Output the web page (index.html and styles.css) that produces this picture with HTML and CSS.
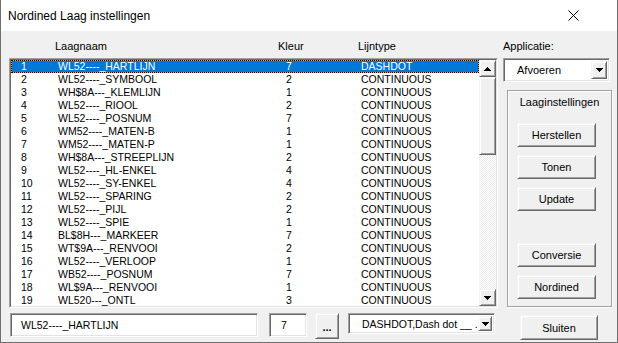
FILE: index.html
```html
<!DOCTYPE html>
<html>
<head>
<meta charset="utf-8">
<link rel="stylesheet" href="styles.css">
</head>
<body>
<div class="window">
  <div class="titlebar">
    <span class="title">Nordined Laag instellingen</span>
    <svg class="close" width="11" height="11" viewBox="0 0 11 11"><path d="M0.5 0.5L10.5 10.5M10.5 0.5L0.5 10.5" stroke="#000" stroke-width="1" fill="none"/></svg>
  </div>
  <div class="body">
    <div class="left">
      <div class="headers"><span>Laagnaam</span><span>Kleur</span><span>Lijntype</span></div>
      <div class="listbox">
        <div class="listinner">
          <div class="rows">
            <div class="row sel"><span>1</span><span>WL52----_HARTLIJN</span><span>7</span><span>DASHDOT</span></div>
            <div class="row"><span>2</span><span>WL52----_SYMBOOL</span><span>2</span><span>CONTINUOUS</span></div>
            <div class="row"><span>3</span><span>WH$8A---_KLEMLIJN</span><span>1</span><span>CONTINUOUS</span></div>
            <div class="row"><span>4</span><span>WL52----_RIOOL</span><span>2</span><span>CONTINUOUS</span></div>
            <div class="row"><span>5</span><span>WL52----_POSNUM</span><span>7</span><span>CONTINUOUS</span></div>
            <div class="row"><span>6</span><span>WM52----_MATEN-B</span><span>1</span><span>CONTINUOUS</span></div>
            <div class="row"><span>7</span><span>WM52----_MATEN-P</span><span>1</span><span>CONTINUOUS</span></div>
            <div class="row"><span>8</span><span>WH$8A---_STREEPLIJN</span><span>2</span><span>CONTINUOUS</span></div>
            <div class="row"><span>9</span><span>WL52----_HL-ENKEL</span><span>4</span><span>CONTINUOUS</span></div>
            <div class="row"><span>10</span><span>WL52----_SY-ENKEL</span><span>4</span><span>CONTINUOUS</span></div>
            <div class="row"><span>11</span><span>WL52----_SPARING</span><span>2</span><span>CONTINUOUS</span></div>
            <div class="row"><span>12</span><span>WL52----_PIJL</span><span>2</span><span>CONTINUOUS</span></div>
            <div class="row"><span>13</span><span>WL52----_SPIE</span><span>1</span><span>CONTINUOUS</span></div>
            <div class="row"><span>14</span><span>BL$8H---_MARKEER</span><span>7</span><span>CONTINUOUS</span></div>
            <div class="row"><span>15</span><span>WT$9A---_RENVOOI</span><span>2</span><span>CONTINUOUS</span></div>
            <div class="row"><span>16</span><span>WL52----_VERLOOP</span><span>1</span><span>CONTINUOUS</span></div>
            <div class="row"><span>17</span><span>WB52----_POSNUM</span><span>7</span><span>CONTINUOUS</span></div>
            <div class="row"><span>18</span><span>WL$9A---_RENVOOI</span><span>1</span><span>CONTINUOUS</span></div>
            <div class="row"><span>19</span><span>WL520---_ONTL</span><span>3</span><span>CONTINUOUS</span></div>
          </div>
          <div class="vscroll">
            <div class="raised sbbtn"><svg width="7" height="4" viewBox="0 0 7 4"><rect x="3" y="0" width="1" height="1"/><rect x="2" y="1" width="3" height="1"/><rect x="1" y="2" width="5" height="1"/><rect x="0" y="3" width="7" height="1"/></svg></div>
            <div class="raised thumb"></div>
            <div class="track"></div>
            <div class="raised sbbtn"><svg width="7" height="4" viewBox="0 0 7 4"><rect x="0" y="0" width="7" height="1"/><rect x="1" y="1" width="5" height="1"/><rect x="2" y="2" width="3" height="1"/><rect x="3" y="3" width="1" height="1"/></svg></div>
          </div>
        </div>
      </div>
      <div class="bottom">
        <div class="field namefield">WL52----_HARTLIJN</div>
        <div class="field colorfield">7</div>
        <div class="raised dots">...</div>
        <div class="field combo ltcombo">
          <span class="combotext">DASHDOT,Dash dot __ . __ . __</span>
          <div class="raised ddbtn"><svg width="7" height="4" viewBox="0 0 7 4"><rect x="0" y="0" width="7" height="1"/><rect x="1" y="1" width="5" height="1"/><rect x="2" y="2" width="3" height="1"/><rect x="3" y="3" width="1" height="1"/></svg></div>
        </div>
      </div>
    </div>
    <div class="right">
      <div class="label">Applicatie:</div>
      <div class="field combo appcombo">
        <span class="combotext">Afvoeren</span>
        <div class="raised ddbtn"><svg width="7" height="4" viewBox="0 0 7 4"><rect x="0" y="0" width="7" height="1"/><rect x="1" y="1" width="5" height="1"/><rect x="2" y="2" width="3" height="1"/><rect x="3" y="3" width="1" height="1"/></svg></div>
      </div>
      <div class="group">
        <div class="grouptitle">Laaginstellingen</div>
        <div class="groupbtns">
          <div class="raised btn">Herstellen</div>
          <div class="raised btn">Tonen</div>
          <div class="raised btn">Update</div>
          <div class="raised btn spaced">Conversie</div>
          <div class="raised btn">Nordined</div>
        </div>
      </div>
      <div class="raised btn close-btn">Sluiten</div>
    </div>
  </div>
</div>
</body>
</html>
```

FILE: styles.css
```css
* { box-sizing: border-box; margin: 0; padding: 0; }
html, body { width: 618px; height: 343px; overflow: hidden; }
body {
  font-family: "Liberation Sans", Arial, sans-serif;
  font-size: 11px;
  color: #000;
  background: #f0f0f0;
}
.window {
  width: 618px;
  height: 343px;
  display: flex;
  flex-direction: column;
  border: 1px solid #6f6f6f;
  border-top: 0;
  background: #f0f0f0;
}
.titlebar {
  flex: none;
  height: 31px;
  background: #fff;
  display: flex;
  align-items: center;
  justify-content: space-between;
  padding: 0 38px 0 7px;
}
.title {
  font-family: "Segoe UI", "Liberation Sans", sans-serif;
  font-size: 12px;
}
.close { display: block; }
.body {
  flex: 1;
  display: flex;
  gap: 5px;
  padding: 8px 5px 2px 8px;
}
.left {
  width: 489px;
  display: flex;
  flex-direction: column;
}
.headers {
  height: 14px;
  line-height: 14px;
  display: grid;
  grid-template-columns: 223px 80px 1fr;
  padding-left: 46px;
}
.listbox {
  margin-top: 5px;
  height: 250px;
  border: 1px solid;
  border-color: #a0a0a0 #fff #fff #a0a0a0;
}
.listinner {
  height: 100%;
  border: 1px solid;
  border-color: #696969 #e3e3e3 #e3e3e3 #696969;
  background: #fff;
  display: flex;
  overflow: hidden;
}
.rows {
  flex: 1;
  overflow: hidden;
  font-size: 10.5px;
}
.row {
  height: 13px;
  line-height: 11px;
  border: 1px solid transparent;
  padding-left: 9px;
  display: grid;
  grid-template-columns: 37px 228px 75px 1fr;
  white-space: nowrap;
}
.row.sel {
  color: #fff;
  border: 1px dotted #000;
  background: linear-gradient(#0078d7, #0078d7) padding-box, #f0a040 border-box;
}
.vscroll {
  width: 17px;
  display: flex;
  flex-direction: column;
}
.raised {
  background: #f0f0f0;
  border: 1px solid;
  border-color: #f4f4f4 #696969 #696969 #f4f4f4;
  box-shadow: inset 1px 1px #fff, inset -1px -1px #a0a0a0;
}
.sbbtn {
  height: 17px;
  display: flex;
  align-items: center;
  justify-content: center;
  flex: none;
}
.thumb { height: 78px; flex: none; }
.track {
  flex: 1;
  background: repeating-conic-gradient(#fff 0 25%, #ececec 0 50%) 0 0 / 2px 2px;
}
.bottom {
  margin-top: 5px;
  height: 27px;
  display: flex;
  align-items: flex-start;
}
.field {
  background: #fff;
  border: 1px solid;
  border-color: #a0a0a0 #fff #fff #a0a0a0;
  box-shadow: inset 1px 1px #696969, inset -1px -1px #e3e3e3;
  white-space: nowrap;
  overflow: hidden;
}
.namefield {
  margin-left: 1px;
  width: 248px;
  height: 24px;
  line-height: 22px;
  padding-left: 10px;
  font-size: 10.5px;
}
.colorfield {
  margin-left: 11px;
  width: 38px;
  height: 24px;
  line-height: 22px;
  padding-left: 11px;
  font-size: 10.5px;
}
.dots {
  margin-left: 8px;
  width: 24px;
  height: 26px;
  display: flex;
  justify-content: center;
  align-items: flex-end;
  padding-bottom: 5px;
  font-weight: bold;
  font-size: 11px;
  line-height: 11px;
}
.combo {
  display: flex;
  align-items: stretch;
  padding: 2px;
}
.combotext {
  flex: 1;
  overflow: hidden;
  white-space: nowrap;
  display: flex;
  align-items: center;
}
.ltcombo {
  margin-left: 9px;
  width: 147px;
  height: 21px;
}
.ltcombo .combotext { padding-left: 11px; font-size: 10.5px; }
.ddbtn {
  flex: none;
  width: 15px;
  display: flex;
  align-items: center;
  justify-content: center;
}
.ltcombo .ddbtn { width: 14px; }
.right {
  width: 109px;
  display: flex;
  flex-direction: column;
}
.label { height: 14px; line-height: 14px; }
.appcombo {
  margin-top: 5px;
  width: 107px;
  height: 24px;
}
.appcombo .combotext { padding-left: 11px; }
.appcombo .ddbtn { width: 16px; }
.group {
  margin-top: 8px;
  margin-left: 4px;
  width: 105px;
  height: 217px;
  border: 1px solid #a0a0a0;
  box-shadow: inset 1px 1px #fff, 1px 1px #fff;
  padding-top: 4px;
}
.grouptitle {
  height: 14px;
  line-height: 14px;
  text-align: center;
}
.groupbtns {
  margin-top: 14px;
  padding-left: 9px;
  display: flex;
  flex-direction: column;
  gap: 8px;
}
.btn {
  width: 79px;
  height: 24px;
  display: flex;
  align-items: center;
  justify-content: center;
}
.btn.spaced { margin-top: 24px; }
.close-btn {
  margin-top: 8px;
  margin-left: 17px;
  width: 78px;
  height: 25px;
}
```
